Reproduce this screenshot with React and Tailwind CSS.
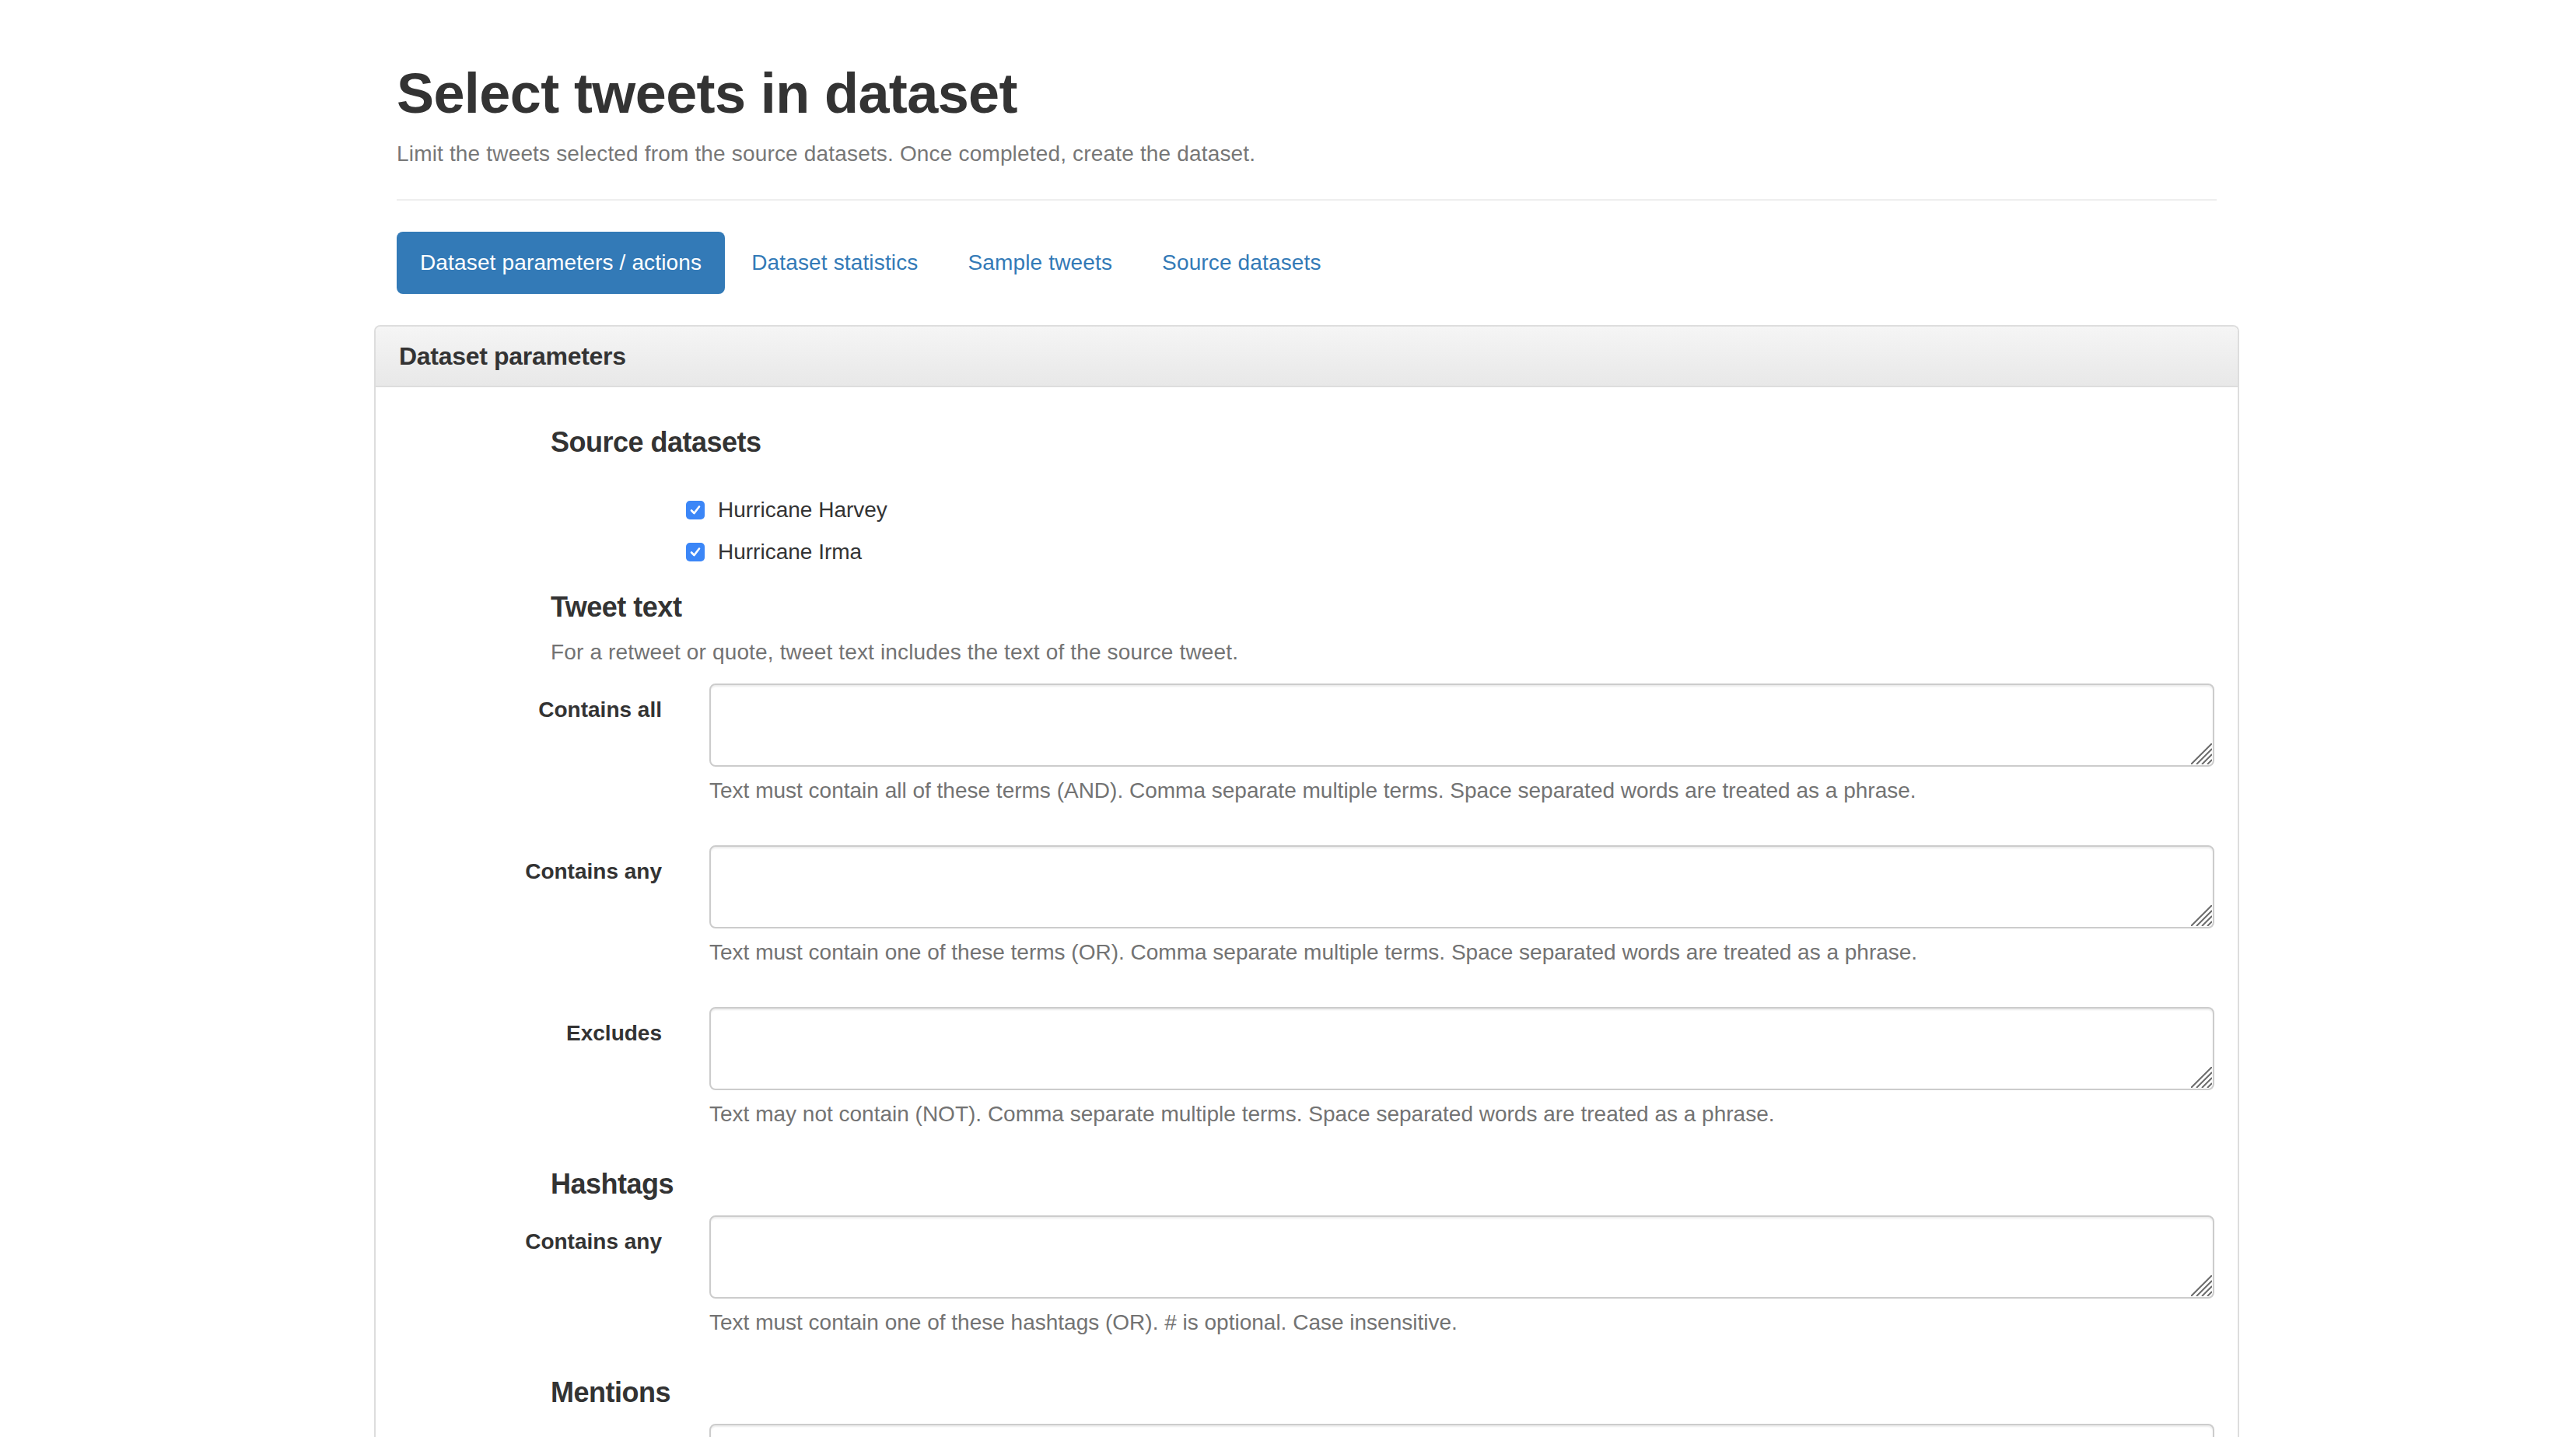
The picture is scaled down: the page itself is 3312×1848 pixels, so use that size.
const CheckBox = () => (
  <span className="flex h-[24px] w-[24px] shrink-0 items-center justify-center rounded-[5px] bg-[#3b86f7]">
    <svg width="16" height="16" viewBox="0 0 16 16" fill="none">
      <path d="M3 8.5 L6.5 12 L13 3.5" stroke="white" strokeWidth="2.6" strokeLinecap="round" strokeLinejoin="round" />
    </svg>
  </span>
);

const Grip = () => (
  <svg
    className="pointer-events-none absolute bottom-[3px] right-[3px]"
    width="27"
    height="27"
    viewBox="0 0 27 27"
  >
    <g stroke="#6b6b6b" strokeWidth="2">
      <line x1="27" y1="0" x2="0" y2="27" />
      <line x1="27" y1="7" x2="7" y2="27" />
      <line x1="27" y1="14" x2="14" y2="27" />
      <line x1="27" y1="21" x2="21" y2="27" />
    </g>
  </svg>
);

const Field = ({ label, help, className = '' }) => (
  <div className={`flex ${className}`}>
    <label className="w-[368px] shrink-0 pt-[14px] text-right text-[28px] font-bold leading-[40px] text-[#333]">
      {label}
    </label>
    <div className="ml-[61px] w-[1935px]">
      <div className="relative">
        <textarea
          rows={2}
          className="block h-[107px] w-full resize-none rounded-[8px] border-2 border-[#ccc] bg-white shadow-[inset_0_2px_2px_rgba(0,0,0,0.075)] outline-none"
        />
        <Grip />
      </div>
      {help && <p className="mt-[11px] text-[28px] leading-[40px] text-[#737373]">{help}</p>}
    </div>
  </div>
);

const Heading = ({ children, className = '' }) => (
  <h4 className={`ml-[225px] text-[36px] font-bold leading-[40px] tracking-[-0.5px] text-[#333] ${className}`}>
    {children}
  </h4>
);

const App = () => {
  return (
    <div className="min-h-screen overflow-hidden bg-white font-['Liberation_Sans',Arial,sans-serif] text-[#333]">
      <div className="ml-[481px] w-[2398px] pt-[81px]">
        {/* page header */}
        <div className="px-[29px]">
          <h1 className="text-[72px] font-bold leading-[79px] tracking-[-0.6px] text-[#333]">
            Select tweets in dataset
          </h1>
          <p className="mt-[18px] text-[28px] leading-[40px] tracking-[0.17px] text-[#777]">
            Limit the tweets selected from the source datasets. Once completed, create the dataset.
          </p>
          <div className="mt-[38px] h-[2px] bg-[#eee]" />

          {/* tabs */}
          <nav className="mt-[40px] flex gap-[4px] text-[28px] tracking-[0.15px]">
            <a className="flex h-[80px] items-center rounded-[8px] bg-[#337ab7] px-[30px] text-white">
              Dataset parameters / actions
            </a>
            <a className="flex h-[80px] items-center px-[30px] text-[#337ab7]">Dataset statistics</a>
            <a className="flex h-[80px] items-center px-[30px] text-[#337ab7]">Sample tweets</a>
            <a className="flex h-[80px] items-center px-[30px] text-[#337ab7]">Source datasets</a>
          </nav>
        </div>

        {/* panel */}
        <div className="mt-[40px] rounded-t-[8px] border-2 border-b-0 border-[#ddd]">
          <div className="rounded-t-[6px] border-b-2 border-[#ddd] bg-gradient-to-b from-[#f5f5f5] to-[#e8e8e8] px-[30px] pb-[20px] pt-[20px]">
            <h3 className="text-[32px] font-bold leading-[36px] tracking-[-0.3px] text-[#333]">Dataset parameters</h3>
          </div>

          <div className="pt-[51px] pb-[40px]">
            <Heading>Source datasets</Heading>
            <div className="ml-[399px] mt-[47px] flex h-[40px] items-center gap-[17px] text-[28px] text-[#333]">
              <CheckBox />
              <span>Hurricane Harvey</span>
            </div>
            <div className="ml-[399px] mt-[14px] flex h-[40px] items-center gap-[17px] text-[28px] text-[#333]">
              <CheckBox />
              <span>Hurricane Irma</span>
            </div>

            <Heading className="mt-[31px]">Tweet text</Heading>
            <p className="ml-[225px] mt-[18px] text-[28px] leading-[40px] tracking-[0.15px] text-[#737373]">
              For a retweet or quote, tweet text includes the text of the source tweet.
            </p>
            <Field
              className="mt-[20px]"
              label="Contains all"
              help="Text must contain all of these terms (AND). Comma separate multiple terms. Space separated words are treated as a phrase."
            />
            <Field
              className="mt-[50px]"
              label="Contains any"
              help="Text must contain one of these terms (OR). Comma separate multiple terms. Space separated words are treated as a phrase."
            />
            <Field
              className="mt-[50px]"
              label="Excludes"
              help="Text may not contain (NOT). Comma separate multiple terms. Space separated words are treated as a phrase."
            />

            <Heading className="mt-[50px]">Hashtags</Heading>
            <Field
              className="mt-[20px]"
              label="Contains any"
              help="Text must contain one of these hashtags (OR). # is optional. Case insensitive."
            />

            <Heading className="mt-[50px]">Mentions</Heading>
            <Field className="mt-[20px]" label="" help="" />
          </div>
        </div>
      </div>
    </div>
  );
};

export default App;
